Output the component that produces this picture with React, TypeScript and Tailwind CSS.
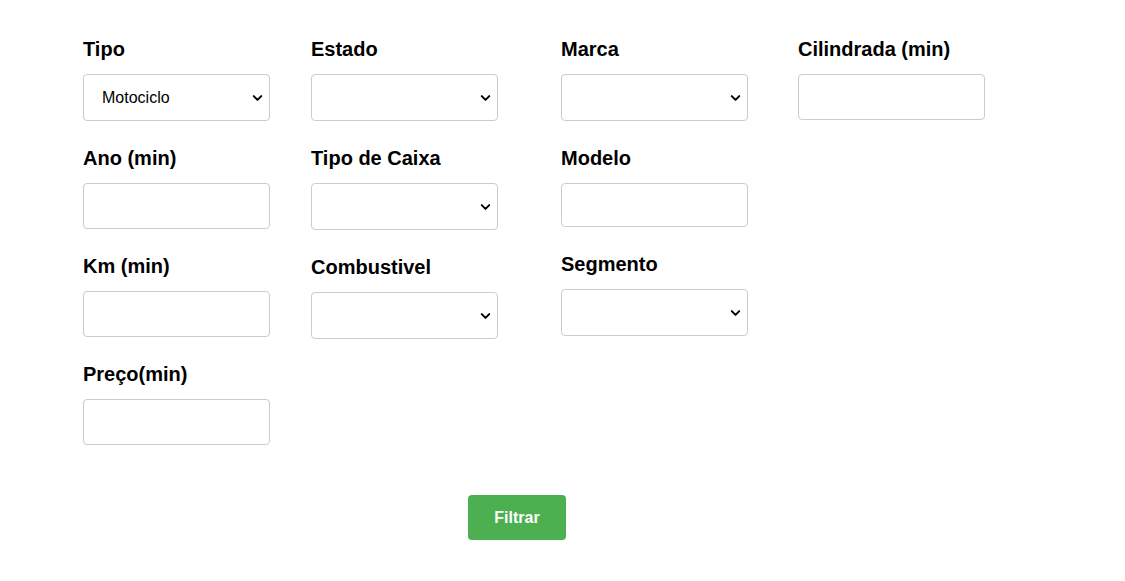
import React from "react";
import { ChevronDown } from "lucide-react";

const labelCls = "block text-[20px] leading-[23px] font-bold text-black";

const SelectBox: React.FC<{ value?: string }> = ({ value }) => (
  <div className="relative mt-[13px] w-[187px]">
    <select
      defaultValue={value ?? ""}
      className="block h-[47px] w-full appearance-none rounded-[4px] border border-[#cccccc] bg-white pl-[18px] text-[16px] text-black outline-none"
    >
      <option value="">{""}</option>
      {value && <option value={value}>{value}</option>}
    </select>
    <ChevronDown
      className="pointer-events-none absolute right-[5px] top-1/2 h-[15px] w-[15px] -translate-y-1/2 text-black"
      strokeWidth={3.2}
    />
  </div>
);

const TextBox: React.FC<{ h?: string }> = ({ h = "h-[46px]" }) => (
  <input
    type="text"
    className={`mt-[13px] block w-[187px] ${h} rounded-[4px] border border-[#cccccc] bg-white px-3 text-[16px] outline-none`}
  />
);

const Field: React.FC<{ label: string; children: React.ReactNode; first?: boolean }> = ({
  label,
  children,
  first,
}) => (
  <div className={first ? "" : "mt-[26px]"}>
    <label className={labelCls}>{label}</label>
    {children}
  </div>
);

export default function App() {
  return (
    <div
      className="min-h-[581px] w-full bg-white pt-[38px] pl-[83px]"
      style={{ fontFamily: '"Liberation Sans", Arial, sans-serif' }}
    >
      <div className="flex items-start">
        {/* coluna 1 */}
        <div className="flex w-[228px] flex-col">
          <Field label="Tipo" first>
            <SelectBox value="Motociclo" />
          </Field>
          <Field label="Ano (min)">
            <TextBox />
          </Field>
          <Field label="Km (min)">
            <TextBox />
          </Field>
          <Field label="Preço(min)">
            <TextBox />
          </Field>
        </div>

        {/* coluna 2 */}
        <div className="flex w-[250px] flex-col">
          <Field label="Estado" first>
            <SelectBox />
          </Field>
          <Field label="Tipo de Caixa">
            <SelectBox />
          </Field>
          <Field label="Combustivel">
            <SelectBox />
          </Field>
        </div>

        {/* coluna 3 */}
        <div className="flex w-[237px] flex-col">
          <Field label="Marca" first>
            <SelectBox />
          </Field>
          <Field label="Modelo">
            <TextBox h="h-[44px]" />
          </Field>
          <Field label="Segmento">
            <SelectBox />
          </Field>
        </div>

        {/* coluna 4 */}
        <div className="flex w-[187px] flex-col">
          <Field label="Cilindrada (min)" first>
            <TextBox />
          </Field>
        </div>
      </div>

      <div className="mt-[50px] pl-[385px]">
        <button className="h-[45px] w-[98px] rounded-[4px] bg-[#4caf50] text-[16px] font-bold text-white">
          Filtrar
        </button>
      </div>
    </div>
  );
}
